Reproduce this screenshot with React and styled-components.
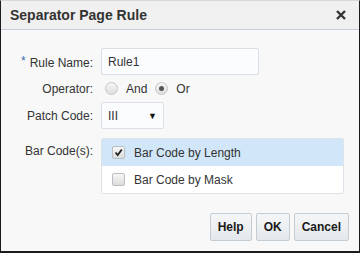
import React, { useState } from "react";
import styled, { createGlobalStyle } from "styled-components";

const Global = createGlobalStyle`
  html, body { margin: 0; padding: 0; }
  body {
    font-family: "Liberation Sans", Arial, sans-serif;
    font-size: 12px;
    color: #333;
    background: #fff;
  }
`;

const Dialog = styled.div`
  width: 360px;
  height: 253px;
  box-sizing: border-box;
  border: 1px solid #1c1c1c;
  border-top-color: #d8d8d8;
  border-bottom-width: 2px;
  background: #f8f8f8;
  display: flex;
  flex-direction: column;
`;

const Header = styled.div`
  height: 28px;
  flex: none;
  background: #f0f0f0;
  border-bottom: 1px solid #c5ceda;
  display: flex;
  align-items: center;
  justify-content: space-between;
  padding: 0 12px 0 9px;
`;

const Title = styled.h1`
  margin: 0;
  font-size: 14px;
  font-weight: bold;
  color: #333;
`;

const Close = styled.button`
  border: none;
  background: none;
  padding: 0;
  width: 12px;
  height: 12px;
  display: flex;
  cursor: pointer;
`;

const Form = styled.div`
  display: grid;
  grid-template-columns: 92px 1fr;
  column-gap: 8px;
  align-items: center;
  padding: 18px 16px 0 0;
`;

const Label = styled.label`
  text-align: right;
  color: #333;
  align-self: ${({ top }) => (top ? "start" : "center")};
  padding-top: ${({ top }) => (top ? "6px" : "0")};
`;

const Star = styled.span`
  color: #3a6fb0;
  margin-right: 4px;
  vertical-align: 2px;
`;

const Field = styled.div`
  height: 27px;
  display: flex;
  align-items: center;
  gap: 8px;
`;

const Input = styled.input`
  width: 158px;
  height: 27px;
  box-sizing: border-box;
  border: 1px solid #dbe0e6;
  border-radius: 2px;
  background: #fbfcfe;
  padding: 0 6px;
  font: inherit;
  color: #333;
  outline: none;
`;

const Radio = styled.span`
  width: 11px;
  height: 11px;
  border-radius: 50%;
  border: 1px solid #c3c7cc;
  background: linear-gradient(#f6f6f6, #dedede);
  display: inline-flex;
  align-items: center;
  justify-content: center;
  margin-left: ${({ first }) => (first ? "4px" : "0")};
  &::after {
    content: "";
    width: 5px;
    height: 5px;
    border-radius: 50%;
    background: ${({ checked }) => (checked ? "#555" : "transparent")};
  }
`;

const Option = styled.span`
  display: inline-flex;
  align-items: center;
  gap: 8px;
`;

const Select = styled.div`
  width: 63px;
  height: 27px;
  box-sizing: border-box;
  border: 1px solid #dbe0e6;
  border-radius: 2px;
  background: #fbfcfe;
  display: flex;
  align-items: center;
  justify-content: space-between;
  padding: 0 6px;
  color: #333;
`;

const Arrow = styled.span`
  font-size: 9px;
  color: #111;
`;

const List = styled.div`
  grid-column: 2;
  margin-top: 9px;
  width: 243px;
  box-sizing: border-box;
  border: 1px solid #dde3e9;
  border-radius: 2px;
  background: #fff;
  overflow: hidden;
`;

const Row = styled.div`
  height: 27px;
  display: flex;
  align-items: center;
  gap: 9px;
  padding-left: 10px;
  background: ${({ selected }) => (selected ? "#d1e6f8" : "#fff")};
`;

const Box = styled.span`
  width: 11px;
  height: 11px;
  border: 1px solid #b9bec4;
  border-radius: 2px;
  background: linear-gradient(#f7f7f7, #dcdcdc);
  display: inline-flex;
  align-items: center;
  justify-content: center;
`;

const Footer = styled.div`
  margin-top: auto;
  display: flex;
  justify-content: flex-end;
  gap: 4px;
  padding: 0 10px 10px 0;
`;

const Button = styled.button`
  height: 28px;
  padding: 0 7px;
  border: 1px solid #c5cdd4;
  border-radius: 2px;
  background: linear-gradient(#f5f6f7, #e4e8eb);
  font-family: "Liberation Sans", Arial, sans-serif;
  font-size: 12px;
  font-weight: bold;
  color: #1a1a1a;
  cursor: pointer;
`;

const barCodes = [
  { label: "Bar Code by Length", checked: true },
  { label: "Bar Code by Mask", checked: false },
];

export default function App() {
  const [op, setOp] = useState("Or");

  return (
    <>
      <Global />
      <Dialog>
        <Header>
          <Title>Separator Page Rule</Title>
          <Close aria-label="Close">
            <svg width="12" height="12" viewBox="0 0 12 12">
              <path d="M2 2 L10 10 M10 2 L2 10" stroke="#333" strokeWidth="2.4" />
            </svg>
          </Close>
        </Header>

        <Form>
          <Label><Star>*</Star>Rule Name:</Label>
          <Field><Input defaultValue="Rule1" /></Field>

          <Label>Operator:</Label>
          <Field>
            <Option onClick={() => setOp("And")}>
              <Radio first checked={op === "And"} />And
            </Option>
            <Option onClick={() => setOp("Or")}>
              <Radio checked={op === "Or"} />Or
            </Option>
          </Field>

          <Label>Patch Code:</Label>
          <Field>
            <Select>
              <span>III</span>
              <Arrow>▼</Arrow>
            </Select>
          </Field>

          <Label top style={{ marginTop: 9 }}>Bar Code(s):</Label>
          <List>
            {barCodes.map((b) => (
              <Row key={b.label} selected={b.checked}>
                <Box>
                  {b.checked && (
                    <svg width="9" height="9" viewBox="0 0 9 9">
                      <path d="M1.5 4.5 L3.7 7 L7.8 1.5" fill="none" stroke="#222" strokeWidth="1.8" />
                    </svg>
                  )}
                </Box>
                {b.label}
              </Row>
            ))}
          </List>
        </Form>

        <Footer>
          <Button>Help</Button>
          <Button>OK</Button>
          <Button>Cancel</Button>
        </Footer>
      </Dialog>
    </>
  );
}
